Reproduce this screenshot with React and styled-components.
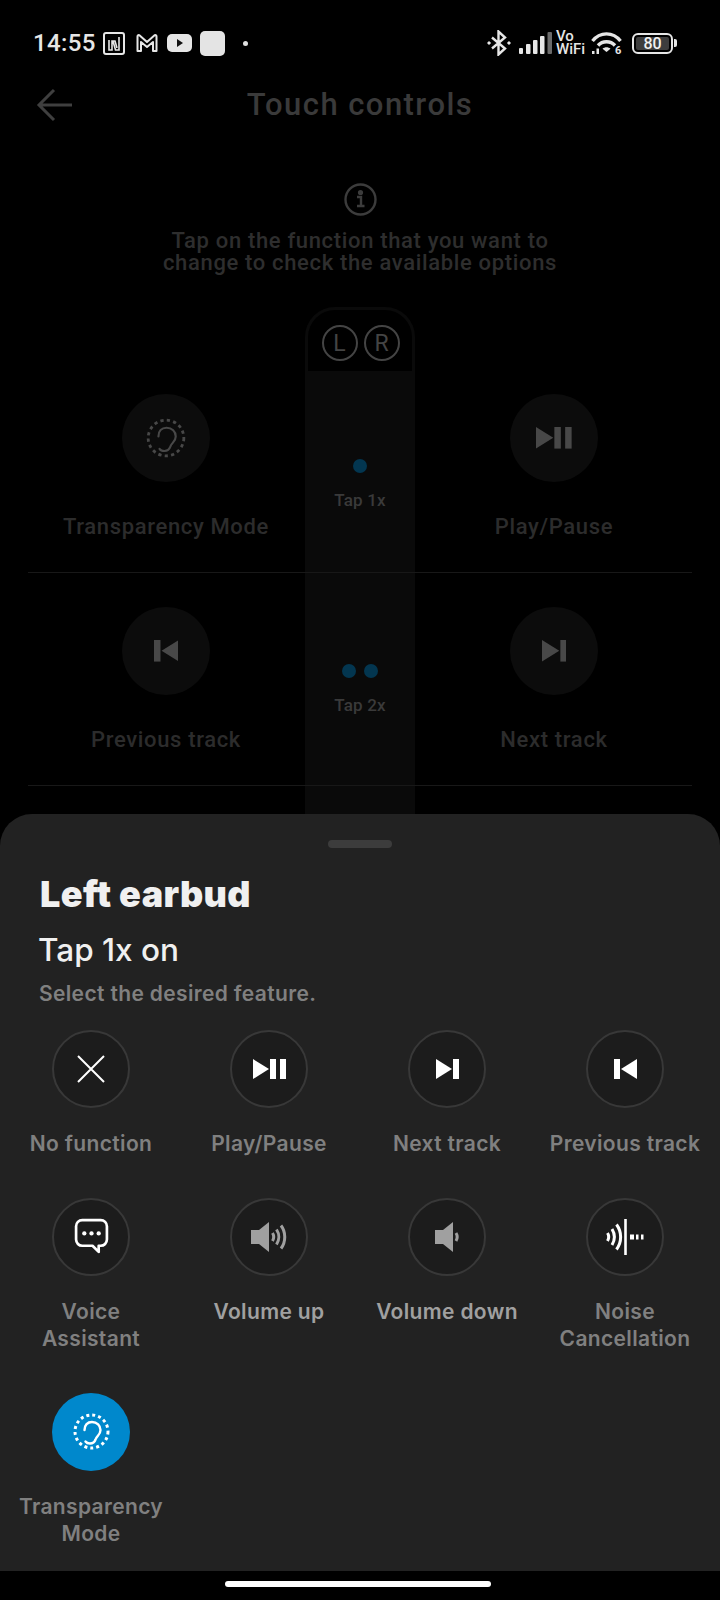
import React from 'react';
import styled, { createGlobalStyle } from 'styled-components';

const GlobalStyle = createGlobalStyle`
  html, body {
    margin: 0;
    padding: 0;
    background: #000;
  }
  * {
    box-sizing: border-box;
  }
`;

const Page = styled.div`
  position: relative;
  width: 720px;
  height: 1600px;
  overflow: hidden;
  background: #000;
  font-family: Roboto, "Liberation Sans", sans-serif;
`;

const StatusBar = styled.div`
  display: flex;
  align-items: center;
  justify-content: space-between;
  height: 86px;
  padding: 0 43px 0 33px;
`;

const StatusGroup = styled.div`
  display: flex;
  align-items: center;
  gap: ${(p) => p.$gap || 10}px;
`;

const Clock = styled.span`
  color: #e6e6e6;
  font-size: 24px;
  font-weight: 500;
  letter-spacing: 0.4px;
  margin-right: -4px;
`;

const BlankIcon = styled.div`
  width: 25px;
  height: 25px;
  border-radius: 5px;
  background: #e4e4e4;
`;

const Dot = styled.div`
  width: 5px;
  height: 5px;
  margin-left: 10px;
  border-radius: 50%;
  background: #e0e0e0;
`;

const SignalSlot = styled.div`
  display: flex;
  margin: 0 -2px 0 2px;
`;

const VoWifi = styled.div`
  width: 29px;
  color: #e6e6e6;
  font-size: 15px;
  font-weight: 500;
  line-height: 13px;
  white-space: pre;
`;

const Battery = styled.div`
  display: flex;
  align-items: center;
  justify-content: center;
  width: 41px;
  height: 21px;
  margin-left: 4px;
  border: 2px solid #e6e6e6;
  border-radius: 6px;
`;

const BatteryFill = styled.div`
  display: flex;
  align-items: center;
  justify-content: center;
  width: 33px;
  height: 13px;
  border-radius: 2px;
  background: #3d3d3d;
  color: #f0f0f0;
  font-size: 16px;
  font-weight: 500;
`;

const BatteryTip = styled.div`
  width: 3px;
  height: 8px;
  margin-left: -5px;
  border-radius: 0 2px 2px 0;
  background: #e6e6e6;
`;

const Header = styled.div`
  position: relative;
  display: flex;
  align-items: center;
  justify-content: center;
  height: 38px;
`;

const BackButton = styled.div`
  position: absolute;
  left: 36px;
  top: 2px;
  line-height: 0;
`;

const Title = styled.h1`
  margin: -2px 0 0;
  color: #3a3a3a;
  font-size: 31px;
  font-weight: 500;
  letter-spacing: 1.45px;
`;

const Intro = styled.div`
  display: flex;
  flex-direction: column;
  align-items: center;
  padding-top: 59px;
  line-height: 0;
`;

const IntroText = styled.p`
  margin: 14px 0 0;
  color: #2e2e2e;
  font-size: 22px;
  font-weight: 500;
  letter-spacing: 0.66px;
  line-height: 22px;
  text-align: center;
`;

const Controls = styled.div`
  position: relative;
  margin-top: 33px;
`;

const EarbudColumn = styled.div`
  position: absolute;
  left: 305px;
  top: 0;
  width: 110px;
  height: 520px;
  background: #0a0a0a;
  border-radius: 30px 30px 0 0;
`;

const EarbudHead = styled.div`
  display: flex;
  justify-content: center;
  gap: 6px;
  height: 61px;
  padding: 15px 0 0 1px;
  margin: 3px 3px 0;
  background: #000;
  border-radius: 27px 27px 0 0;
`;

const SideBadge = styled.div`
  display: flex;
  align-items: center;
  justify-content: center;
  width: 36px;
  height: 36px;
  border: 2px solid #444;
  border-radius: 50%;
  color: #444;
  font-size: 23px;
  font-weight: 400;
`;

const ControlRow = styled.div`
  position: relative;
  display: grid;
  grid-template-columns: 1fr 1fr;
  height: ${(p) => p.$height}px;
  margin: 0 28px;
  padding-top: ${(p) => p.$top}px;
  border-bottom: 1px solid #181818;
`;

const DimCell = styled.div`
  display: flex;
  flex-direction: column;
  align-items: center;
  margin-left: ${(p) => p.$shift || 0}px;
`;

const DimCircle = styled.div`
  display: flex;
  align-items: center;
  justify-content: center;
  width: 88px;
  height: 88px;
  border-radius: 50%;
  background: #0c0c0c;
  color: #484848;
`;

const DimLabel = styled.div`
  margin-top: 32px;
  color: #2c2c2c;
  font-size: 22px;
  font-weight: 500;
  letter-spacing: 0.65px;
  line-height: 26px;
  white-space: nowrap;
`;

const TapMark = styled.div`
  position: absolute;
  left: 0;
  width: 664px;
  top: ${(p) => p.$top}px;
  display: flex;
  flex-direction: column;
  align-items: center;
`;

const TapDots = styled.div`
  display: flex;
  gap: 8px;
`;

const TapDot = styled.div`
  width: 14px;
  height: 14px;
  border-radius: 50%;
  background: #033650;
`;

const TapLabel = styled.div`
  margin-top: 17px;
  color: #3a3a3a;
  font-size: 17px;
  font-weight: 500;
  line-height: 20px;
  letter-spacing: 0.2px;
`;

const BottomLayer = styled.div`
  position: absolute;
  left: 0;
  right: 0;
  bottom: 0;
`;

const Sheet = styled.div`
  height: 757px;
  padding: 26px 0 0;
  background: #222;
  border-radius: 32px 32px 0 0;
  font-family: Inter, "Liberation Sans", sans-serif;
`;

const Handle = styled.div`
  width: 64px;
  height: 8px;
  margin: 0 auto;
  border-radius: 4px;
  background: #3c3c3c;
`;

const SheetHead = styled.div`
  padding: 24px 39px 0;
`;

const SheetTitle = styled.h2`
  margin: 0 0 0 1px;
  color: #f0f0f0;
  font-size: 36px;
  font-weight: 900;
  letter-spacing: 0.35px;
  line-height: 44px;
`;

const SheetSub = styled.div`
  margin: 14px 0 0 -1px;
  color: #f0f0f0;
  font-size: 31.5px;
  font-weight: 500;
  line-height: 40px;
`;

const SheetHint = styled.div`
  margin-top: 10px;
  color: #808080;
  font-size: 21px;
  font-weight: 600;
  letter-spacing: 0.35px;
  line-height: 28px;
`;

const FeatureGrid = styled.div`
  display: grid;
  grid-template-columns: repeat(4, 178px);
  row-gap: 40px;
  padding: 22px 0 0 2px;
`;

const Feature = styled.div`
  display: flex;
  flex-direction: column;
  align-items: center;
  gap: 22px;
`;

const FeatureCircle = styled.div`
  display: flex;
  align-items: center;
  justify-content: center;
  width: 78px;
  height: 78px;
  border-radius: 50%;
  border: ${(p) => (p.$active ? 'none' : '2px solid #383838')};
  background: ${(p) => (p.$active ? '#0088cc' : '#1c1c1c')};
  color: ${(p) => (p.$muted ? '#a0a0a0' : '#fff')};
`;

const FeatureLabel = styled.div`
  color: ${(p) => (p.$muted ? '#a0a0a0' : '#808080')};
  font-size: 21px;
  font-weight: 600;
  letter-spacing: 0.35px;
  line-height: 27.5px;
  text-align: center;
  white-space: pre;
`;

const NavBar = styled.div`
  display: flex;
  justify-content: center;
  height: 29px;
  padding: 10px 4px 0 0;
  background: #000;
`;

const HomeIndicator = styled.div`
  width: 266px;
  height: 6px;
  border-radius: 3px;
  background: #fff;
`;

const PlayPauseIcon = ({ scale = 1 }) => (
  <svg width={33 * scale} height={20 * scale} viewBox="0 0 33 20" fill="currentColor">
    <path d="M0 0l16 10L0 20z" />
    <rect x="17" y="0" width="6" height="20" />
    <rect x="27" y="0" width="6" height="20" />
  </svg>
);

const NextIcon = ({ scale = 1 }) => (
  <svg width={23 * scale} height={20 * scale} viewBox="0 0 23 20" fill="currentColor">
    <path d="M0 0l16 10L0 20z" />
    <rect x="17" y="0" width="6" height="20" />
  </svg>
);

const PrevIcon = ({ scale = 1 }) => (
  <svg width={23 * scale} height={20 * scale} viewBox="0 0 23 20" fill="currentColor">
    <path d="M23 0L7 10l16 10z" />
    <rect x="0" y="0" width="6" height="20" />
  </svg>
);

const CloseIcon = () => (
  <svg width="28" height="28" viewBox="0 0 28 28" stroke="currentColor" strokeWidth="2" fill="none">
    <path d="M1 1l26 26M27 1L1 27" />
  </svg>
);

const ChatIcon = () => (
  <svg width="37" height="37" viewBox="0 0 36 36" fill="none">
    <path
      d="M9 2h18a6 6 0 0 1 6 6v13a6 6 0 0 1-6 6h-2v6l-6-6H9a6 6 0 0 1-6-6V8a6 6 0 0 1 6-6z"
      stroke="currentColor"
      strokeWidth="2.6"
      strokeLinejoin="round"
    />
    <circle cx="11" cy="15" r="2.100" fill="currentColor" />
    <circle cx="18" cy="15" r="2.100" fill="currentColor" />
    <circle cx="25" cy="15" r="2.100" fill="currentColor" />
  </svg>
);

const VolumeUpIcon = () => (
  <svg width="36" height="30" viewBox="0 0 36 30" fill="none">
    <path d="M0 8h8L18 0v30L8 22H0z" fill="currentColor" />
    <path d="M21.500 11c1.500 2.500 1.500 5.500 0 8" stroke="currentColor" strokeWidth="3" />
    <path d="M25.500 7.500c3 4.500 3 10.500 0 15" stroke="currentColor" strokeWidth="3" />
    <path d="M30 3.500c5 6.500 5 16.500 0 23" stroke="currentColor" strokeWidth="3" />
  </svg>
);

const VolumeDownIcon = () => (
  <svg width="24" height="30" viewBox="0 0 24 30" fill="none">
    <path d="M0 8h8L18 0v30L8 22H0z" fill="currentColor" />
    <path d="M21 11c1.500 2.500 1.500 5.500 0 8" stroke="currentColor" strokeWidth="3" />
  </svg>
);

const NoiseIcon = () => (
  <svg width="38" height="36" viewBox="0 0 38 36" fill="none" stroke="currentColor">
    <path d="M1.500 14c1.500 2.500 1.500 5.500 0 8" strokeWidth="3" />
    <path d="M6 10c3 5 3 11 0 16" strokeWidth="3" />
    <path d="M10.500 5.500c5.500 7.500 5.500 17.500 0 25" strokeWidth="3" />
    <path d="M19.500 0v36" strokeWidth="2.600" />
    <path d="M24 18h4M30 18h2.500M35 18h2.500" strokeWidth="5" />
  </svg>
);

const EarIcon = ({ size = 37, width = 2.4 }) => (
  <svg width={size} height={size} viewBox="0 0 37 37" fill="none" stroke="currentColor">
    <circle cx="18.500" cy="18.500" r="16.500" strokeWidth={width + 0.6} strokeDasharray="3 3" />
    <path
      d="M11.500 17C11.500 12 14.500 9 19 9c5 0 8.500 3.500 8.500 8 0 5-4 6-5 9.500-1 3-3 4-5.500 4-2 0-3.500-.5-4.500-2"
      strokeWidth={width}
      strokeLinecap="round"
    />
  </svg>
);

const NfcIcon = () => (
  <svg width="22" height="23" viewBox="0 0 22 23" fill="none" stroke="#e6e6e6">
    <rect x="1" y="1" width="20" height="21" rx="2" strokeWidth="2" />
    <path d="M6 8v10h3V9h3l2 7M16 5v13h-3.500L10 9" strokeWidth="1.600" />
  </svg>
);

const GmailIcon = () => (
  <svg width="23" height="19" viewBox="0 0 23 19" fill="none" stroke="#e6e6e6" strokeWidth="2" strokeLinejoin="round">
    <path d="M1.500 2.500c0-1.200 1.300-1.800 2.200-1L11 8l7.300-6.500c.9-.8 2.200-.2 2.200 1V17h-3.500V8L11 13 5 8v9H1.500z" />
  </svg>
);

const YoutubeIcon = () => (
  <svg width="25" height="18" viewBox="0 0 25 18">
    <rect width="25" height="18" rx="5" fill="#e6e6e6" />
    <path d="M10 5l6 4-6 4z" fill="#111" />
  </svg>
);

const BluetoothIcon = () => (
  <svg width="24" height="26" viewBox="0 0 24 26" fill="none" stroke="#e6e6e6" strokeWidth="2.400">
    <path d="M5 7.500l13 11L11.500 24.500V1.500L18 7.500 5 18.500" />
    <rect x="0.500" y="11.500" width="3" height="3" fill="#e6e6e6" stroke="none" transform="rotate(45 2 13)" />
    <rect x="20.500" y="11.500" width="3" height="3" fill="#e6e6e6" stroke="none" transform="rotate(45 22 13)" />
  </svg>
);

const SignalIcon = () => (
  <svg width="33" height="22" viewBox="0 0 33 22" fill="#e6e6e6">
    <rect x="0" y="16" width="4" height="6" rx="1" />
    <rect x="7" y="12" width="4.500" height="10" rx="1" />
    <rect x="14" y="8" width="4.500" height="14" rx="1" />
    <rect x="21" y="4" width="4.500" height="18" rx="1" />
    <rect x="28.500" y="0" width="4.500" height="22" rx="1" fill="#6a6a6a" />
  </svg>
);

const WifiIcon = () => (
  <svg width="31" height="30" viewBox="0 -3 31 30" fill="none" stroke="#e6e6e6" strokeWidth="3.400">
    <path d="M1.500 10C9 0.500 22 0.500 29.500 10" />
    <path d="M7 14.500c4.500-5 12.500-5 17 0" />
    <path d="M15.500 21l-4-3.200c2.200-2 5.800-2 8 0z" fill="#e6e6e6" stroke="none" />
    <path d="M1 20h2.500v3H1zM5.500 17.500H8V23H5.500z" fill="#e6e6e6" stroke="none" />
    <text x="24" y="23" fontSize="11" fontWeight="700" fill="#e6e6e6" stroke="none" fontFamily="Roboto">6</text>
  </svg>
);

const features = [
  { label: 'No function', icon: <CloseIcon /> },
  { label: 'Play/Pause', icon: <PlayPauseIcon /> },
  { label: 'Next track', icon: <NextIcon /> },
  { label: 'Previous track', icon: <PrevIcon /> },
  { label: 'Voice\nAssistant', icon: <ChatIcon /> },
  { label: 'Volume up', icon: <VolumeUpIcon />, muted: true },
  { label: 'Volume down', icon: <VolumeDownIcon />, muted: true },
  { label: 'Noise\nCancellation', icon: <NoiseIcon /> },
  { label: 'Transparency\nMode', icon: <EarIcon />, active: true },
];

const App = () => {
  return (
    <Page>
      <GlobalStyle />
      <StatusBar>
        <StatusGroup $gap={11}>
          <Clock>14:55</Clock>
          <NfcIcon />
          <StatusGroup $gap={8}>
            <GmailIcon />
            <YoutubeIcon />
            <BlankIcon />
            <Dot />
          </StatusGroup>
        </StatusGroup>
        <StatusGroup $gap={6}>
          <BluetoothIcon />
          <SignalSlot>
            <SignalIcon />
          </SignalSlot>
          <VoWifi>{'Vo\nWiFi'}</VoWifi>
          <WifiIcon />
          <Battery>
            <BatteryFill>80</BatteryFill>
          </Battery>
          <BatteryTip />
        </StatusGroup>
      </StatusBar>

      <Header>
        <BackButton>
          <svg width="37" height="34" viewBox="0 0 37 34" fill="none" stroke="#3f3f3f" strokeWidth="3">
            <path d="M36 17H3M18 2L3 17l15 15" />
          </svg>
        </BackButton>
        <Title>Touch controls</Title>
      </Header>

      <Intro>
        <svg width="33" height="33" viewBox="0 0 33 33" fill="none" stroke="#3c3c3c" strokeWidth="2.400">
          <circle cx="16.500" cy="16.500" r="15" />
          <path d="M13 14h4v9M13 23h7.500" />
          <circle cx="16.500" cy="9.500" r="1.400" fill="#3c3c3c" />
        </svg>
        <IntroText>
          Tap on the function that you want to
          <br />
          change to check the available options
        </IntroText>
      </Intro>

      <Controls>
        <EarbudColumn>
          <EarbudHead>
            <SideBadge>L</SideBadge>
            <SideBadge>R</SideBadge>
          </EarbudHead>
        </EarbudColumn>
        <ControlRow $height={266} $top={87}>
          <DimCell $shift={-56}>
            <DimCircle>
              <EarIcon size={40} width={2} />
            </DimCircle>
            <DimLabel>Transparency Mode</DimLabel>
          </DimCell>
          <DimCell $shift={56}>
            <DimCircle>
              <PlayPauseIcon scale={1.08} />
            </DimCircle>
            <DimLabel>Play/Pause</DimLabel>
          </DimCell>
          <TapMark $top={152}>
            <TapDots>
              <TapDot />
            </TapDots>
            <TapLabel>Tap 1x</TapLabel>
          </TapMark>
        </ControlRow>
        <ControlRow $height={213} $top={34}>
          <DimCell $shift={-56}>
            <DimCircle>
              <PrevIcon scale={1.08} />
            </DimCircle>
            <DimLabel>Previous track</DimLabel>
          </DimCell>
          <DimCell $shift={56}>
            <DimCircle>
              <NextIcon scale={1.08} />
            </DimCircle>
            <DimLabel>Next track</DimLabel>
          </DimCell>
          <TapMark $top={91}>
            <TapDots>
              <TapDot />
              <TapDot />
            </TapDots>
            <TapLabel>Tap 2x</TapLabel>
          </TapMark>
        </ControlRow>
      </Controls>

      <BottomLayer>
        <Sheet>
          <Handle />
          <SheetHead>
            <SheetTitle>Left earbud</SheetTitle>
            <SheetSub>Tap 1x on</SheetSub>
            <SheetHint>Select the desired feature.</SheetHint>
          </SheetHead>
          <FeatureGrid>
            {features.map((f) => (
              <Feature key={f.label}>
                <FeatureCircle $active={f.active} $muted={f.muted}>
                  {f.icon}
                </FeatureCircle>
                <FeatureLabel $muted={f.muted}>{f.label}</FeatureLabel>
              </Feature>
            ))}
          </FeatureGrid>
        </Sheet>
        <NavBar>
          <HomeIndicator />
        </NavBar>
      </BottomLayer>
    </Page>
  );
};

export default App;
